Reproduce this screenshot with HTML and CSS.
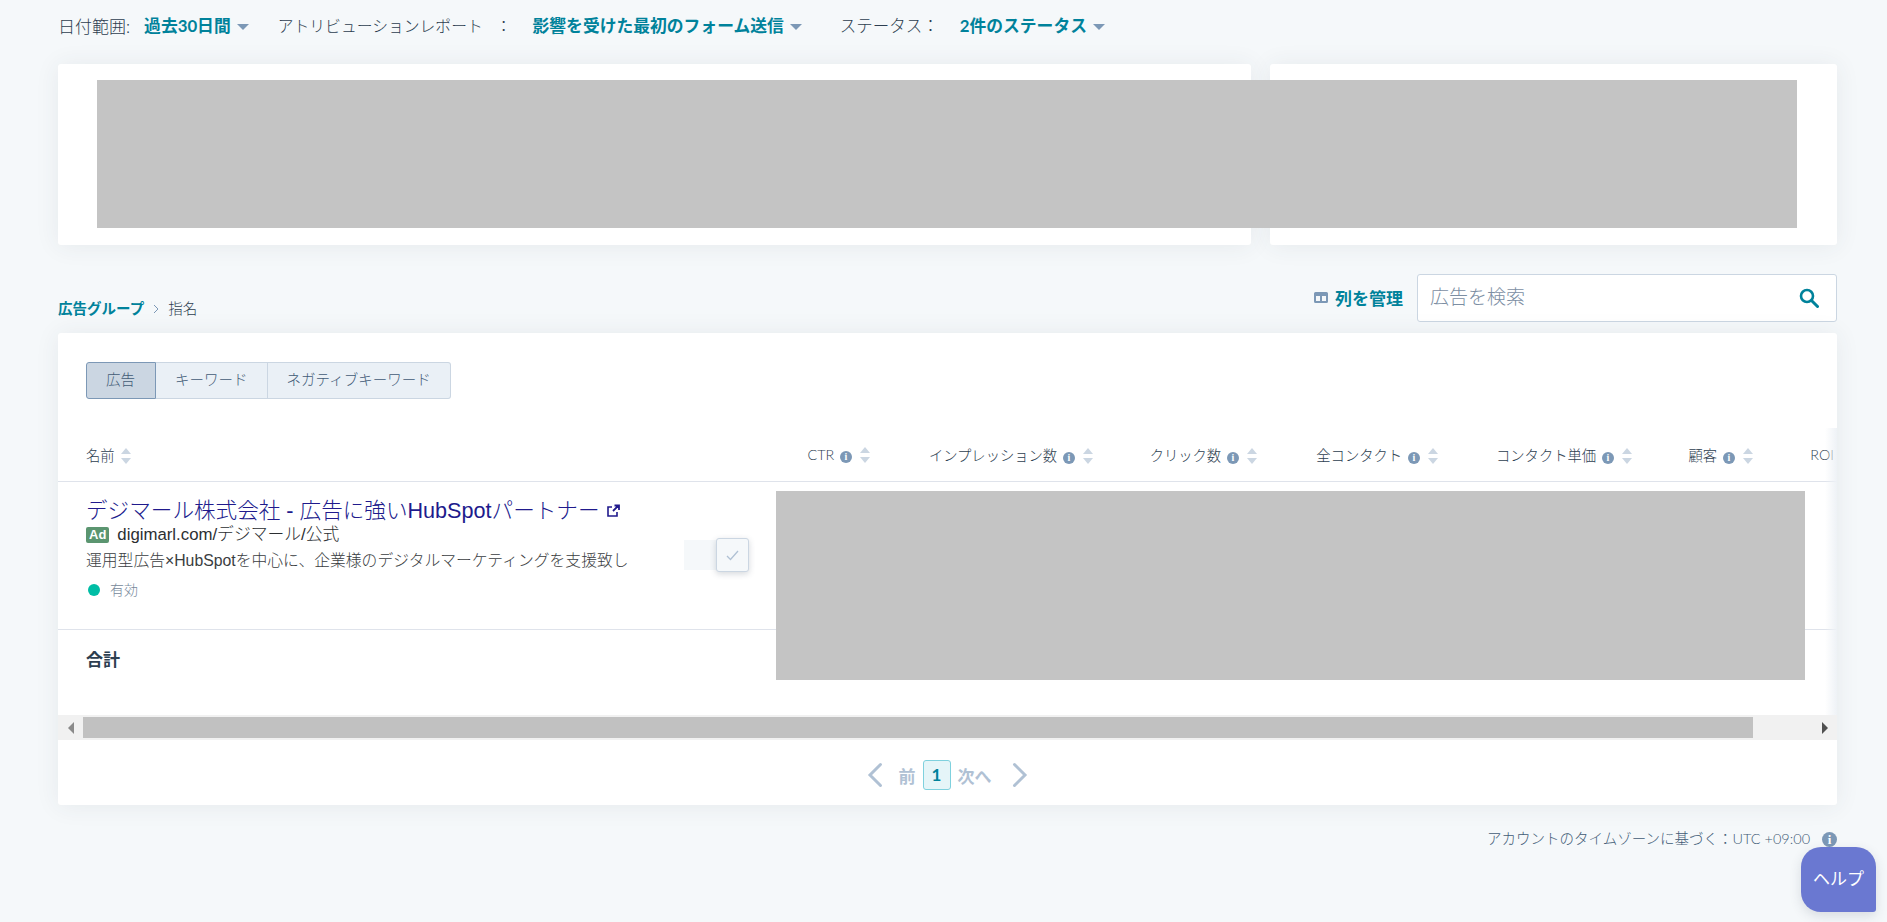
FILE: index.html
```html
<!DOCTYPE html>
<html lang="ja">
<head>
<meta charset="utf-8">
<title>広告</title>
<link rel="stylesheet" href="styles.css">
</head>
<body>
<div class="filters">
    <span class="filter-label">日付範囲:</span>
    <a class="filter-value">過去30日間<i class="caret"></i></a>
    <span class="filter-label second">アトリビューションレポート<span class="colon">：</span></span>
    <a class="filter-value">影響を受けた最初のフォーム送信<i class="caret"></i></a>
    <span class="filter-label third">ステータス：</span>
    <a class="filter-value">2件のステータス<i class="caret"></i></a>
</div>

<div class="summary">
    <div class="card summary-left"></div>
    <div class="card summary-right"></div>
    <div class="redact redact-top"></div>
</div>

<div class="toolbar">
    <div class="crumbs">
        <a>広告グループ</a>
        <svg class="crumb-sep" width="8" height="10" viewBox="0 0 8 10"><path d="M2 1l4 4-4 4" fill="none" stroke="#7c98b6" stroke-width="1"/></svg>
        <span>指名</span>
    </div>
    <div class="toolbar-right">
        <a class="manage">
            <svg width="14" height="11" viewBox="0 0 14 11"><path fill-rule="evenodd" d="M1.500 0h11A1.500 1.500 0 0 1 14 1.500v8a1.500 1.500 0 0 1-1.500 1.500h-11A1.500 1.500 0 0 1 0 9.500v-8A1.500 1.500 0 0 1 1.500 0zM2 4v5h4V4zm6 0v5h4V4z" fill="#7c98b6"/></svg>
            列を管理
        </a>
        <div class="search">
            <span>広告を検索</span>
            <svg width="20" height="20" viewBox="0 0 20 20"><circle cx="8" cy="8" r="6" fill="none" stroke="#00829b" stroke-width="2.600"/><path d="M12.500 12.500L18.500 18.500" stroke="#00829b" stroke-width="3" stroke-linecap="round"/></svg>
        </div>
    </div>
</div>

<div class="card main">
    <div class="tabs">
        <a class="tab active">広告</a>
        <a class="tab">キーワード</a>
        <a class="tab">ネガティブキーワード</a>
    </div>

    <div class="table-wrap">
        <div class="row head">
            <div class="name-col">名前<i class="sort"></i></div>
            <div class="col c1">CTR <i class="info"></i><i class="sort"></i></div>
            <div class="col c2">インプレッション数 <i class="info"></i><i class="sort"></i></div>
            <div class="col c3">クリック数 <i class="info"></i><i class="sort"></i></div>
            <div class="col c4">全コンタクト <i class="info"></i><i class="sort"></i></div>
            <div class="col c5">コンタクト単価 <i class="info"></i><i class="sort"></i></div>
            <div class="col c6">顧客 <i class="info"></i><i class="sort"></i></div>
            <div class="col c7">ROI</div>
        </div>

        <div class="row ad-row">
            <div class="ad">
                <div class="ad-title">デジマール株式会社 - 広告に強いHubSpotパートナー
                    <svg width="14" height="14" viewBox="0 0 14 14"><path d="M6 3H2v9h9V8" fill="none" stroke="#201a8c" stroke-width="1.600"/><path d="M7 7l5-5M8.500 1.500H13V6" fill="none" stroke="#201a8c" stroke-width="1.800"/></svg>
                </div>
                <div class="ad-url"><span class="ad-badge">Ad</span>digimarl.com/デジマール/公式</div>
                <div class="ad-desc">運用型広告×HubSpotを中心に、企業様のデジタルマーケティングを支援致します。</div>
                <div class="ad-status"><i class="dot"></i>有効</div>
            </div>
            <div class="toggle">
                <div class="toggle-knob">
                    <svg width="13" height="11" viewBox="0 0 13 11"><path d="M1 6l3.500 3.500L12 1" fill="none" stroke="#b0c1d4" stroke-width="1.300"/></svg>
                </div>
            </div>
        </div>

        <div class="row total-row">合計</div>
        <div class="edge-shadow"></div>
    </div>

    <div class="scrollbar">
        <div class="scroll-btn"><i class="arrow-left"></i></div>
        <div class="scroll-thumb"></div>
        <div class="scroll-btn end"><i class="arrow-right"></i></div>
    </div>

    <div class="pager">
        <svg width="16" height="26" viewBox="0 0 16 26"><path d="M13.500 2.500L3 13l10.500 10.500" fill="none" stroke="#b0c1d4" stroke-width="3" stroke-linecap="round"/></svg>
        <span class="pager-text prev">前</span>
        <span class="pager-num">1</span>
        <span class="pager-text next">次へ</span>
        <svg width="16" height="26" viewBox="0 0 16 26"><path d="M2.500 2.500L13 13 2.500 23.500" fill="none" stroke="#b0c1d4" stroke-width="3" stroke-linecap="round"/></svg>
    </div>

    <div class="redact redact-table"></div>
</div>

<div class="footnote">アカウントのタイムゾーンに基づく：UTC +09:00 <i class="info big"></i></div>

<a class="help">ヘルプ</a>
</body>
</html>
```

FILE: styles.css
```css
body, html {
    margin: 0;
}

body {
    background-color: #f5f8fa;
    color: #2d3e50;
    font-family: Lato, "Noto Sans CJK JP", sans-serif;
    font-weight: 300;
    height: 922px;
    overflow: hidden;
    position: relative;
    padding: 0 50px 0 58px;
    box-sizing: border-box;
}

a {
    color: #00829b;
}

.card {
    background-color: white;
    border-radius: 3px;
    box-shadow: 0 1px 24px rgba(45, 62, 80, 0.08);
}

.redact {
    background-color: #c4c4c4;
    position: absolute;
}

/* filter bar */
.filters {
    display: flex;
    align-items: center;
    height: 50px;
    font-size: 17px;
}

.filter-label {
    margin-right: 14px;
    white-space: nowrap;
}

.filter-label.second {
    font-size: 15.800px;
    margin-left: 29px;
    margin-right: 21px;
}

.colon {
    margin-left: 13px;
}

.filter-label.third {
    font-size: 16.500px;
    margin-left: 38px;
    margin-right: 21px;
}

.filter-value {
    font-size: 16.800px;
    font-weight: 700;
    white-space: nowrap;
}

.caret {
    display: inline-block;
    margin-left: 6px;
    vertical-align: 2px;
    border-left: 6px solid transparent;
    border-right: 6px solid transparent;
    border-top: 6px solid #7c98b6;
}

/* top cards */
.summary {
    display: flex;
    gap: 19px;
    height: 181px;
    margin-top: 14px;
    position: relative;
}

.summary-left {
    width: 1193px;
}

.summary-right {
    width: 567px;
}

.redact-top {
    left: 39px;
    top: 16px;
    width: 1700px;
    height: 148px;
}

/* breadcrumb + search */
.toolbar {
    display: flex;
    justify-content: space-between;
    align-items: flex-end;
    height: 48px;
    margin-top: 29px;
}

.crumbs {
    font-size: 14.500px;
    line-height: 20px;
    margin-bottom: 3px;
    display: flex;
    align-items: center;
    gap: 8px;
}

.crumbs a {
    font-weight: 700;
}

.toolbar-right {
    display: flex;
    align-items: center;
    gap: 14px;
}

.manage {
    font-size: 17px;
    font-weight: 700;
    display: flex;
    align-items: center;
    gap: 7px;
    margin-bottom: 1px;
}

.search {
    width: 420px;
    height: 48px;
    box-sizing: border-box;
    background-color: white;
    border: 1px solid #cbd6e2;
    border-radius: 3px;
    padding: 0 17px 5px 12px;
    display: flex;
    justify-content: space-between;
    align-items: center;
    font-size: 19px;
    color: #7c8ea3;
}

.search svg {
    margin-top: 5px;
}

/* main card */
.main {
    height: 472px;
    margin-top: 11px;
    position: relative;
}

.tabs {
    display: inline-flex;
    margin: 29px 0 0 28px;
    height: 37px;
    font-size: 14.500px;
    vertical-align: top;
}

.tab {
    color: #425b76;
    background-color: #eaf0f6;
    border: 1px solid #cbd6e2;
    border-left: 0;
    padding: 0 19px;
    line-height: 33px;
    white-space: nowrap;
}

.tab:first-child {
    border-left: 1px solid #7c98b6;
    border-radius: 3px 0 0 3px;
}

.tab:last-child {
    border-radius: 0 3px 3px 0;
}

.tab.active {
    background-color: #cbd6e2;
    border-color: #7c98b6;
    width: 30px;
}

.table-wrap {
    position: absolute;
    top: 95px;
    left: 0;
    right: 0;
    height: 287px;
    overflow: hidden;
}

.row {
    display: flex;
    border-bottom: 1px solid #dfe3eb;
    box-sizing: border-box;
}

.head {
    height: 54px;
    align-items: center;
    font-size: 14.300px;
    white-space: nowrap;
}

.name-col {
    width: 29px;
    margin-left: 28px;
    flex-shrink: 0;
}

.col {
    text-align: right;
    flex-shrink: 0;
}

.c1 { width: 755px; }
.c2 { width: 223px; }
.c3 { width: 164px; }
.c4 { width: 181px; }
.c5 { width: 194px; }
.c6 { width: 121px; }
.c7 { width: 81px; }

.info {
    display: inline-block;
    width: 12px;
    height: 12px;
    border-radius: 50%;
    background-color: #7c98b6;
    color: white;
    font-size: 10px;
    font-weight: 700;
    font-style: normal;
    line-height: 12px;
    text-align: center;
    vertical-align: 0;
    margin-left: 2px;
    font-family: "Liberation Serif", serif;
}

.info::before {
    content: "i";
}

.info.big {
    width: 15px;
    height: 15px;
    line-height: 15px;
    font-size: 13px;
    margin-left: 8px;
    vertical-align: 0;
}

.sort {
    display: inline-block;
    width: 10px;
    height: 16px;
    margin-left: 8px;
    vertical-align: -3px;
    position: relative;
}

.sort::before, .sort::after {
    content: "";
    position: absolute;
    left: 0;
    border-left: 5px solid transparent;
    border-right: 5px solid transparent;
}

.sort::before {
    top: 0;
    border-bottom: 6px solid #cbd6e2;
}

.sort::after {
    bottom: 0;
    border-top: 6px solid #cbd6e2;
}

.name-col .sort {
    margin-left: 6px;
}

.ad-row {
    height: 148px;
    padding: 15px 0 0 28px;
    position: relative;
}

.ad {
    width: 542px;
    overflow: hidden;
}

.ad-title {
    font-size: 21.600px;
    line-height: 27px;
    color: #201a8c;
    white-space: nowrap;
    font-family: "Liberation Sans", "Noto Sans CJK JP", sans-serif;
}

.ad-url {
    font-size: 16.800px;
    line-height: 22px;
    color: #2b2e31;
    font-family: "Liberation Sans", "Noto Sans CJK JP", sans-serif;
}

.ad-badge {
    display: inline-block;
    background-color: #5b9570;
    color: white;
    font-size: 13px;
    font-weight: 700;
    line-height: 16px;
    padding: 0 3px;
    border-radius: 2px;
    margin-right: 8px;
    vertical-align: 1px;
}

.ad-desc {
    font-size: 15.800px;
    line-height: 20px;
    color: #3a3d41;
    margin-top: 5px;
    white-space: nowrap;
    font-family: "Liberation Sans", "Noto Sans CJK JP", sans-serif;
}

.ad-status {
    font-size: 14px;
    line-height: 18px;
    color: #76889a;
    margin-top: 10px;
    display: flex;
    align-items: center;
}

.dot {
    width: 12px;
    height: 12px;
    border-radius: 50%;
    background-color: #00bda5;
    margin: 0 10px 0 2px;
}

.toggle {
    width: 64px;
    height: 30px;
    margin: 43px 0 0 56px;
    background-color: #f5f8fa;
    position: relative;
}

.toggle-knob {
    position: absolute;
    right: -1px;
    top: -2px;
    width: 33px;
    height: 34px;
    box-sizing: border-box;
    background-color: #f5f8fa;
    border: 1px solid #cbd6e2;
    border-radius: 3px;
    box-shadow: 0 2px 6px rgba(45, 62, 80, 0.2);
    display: flex;
    align-items: center;
    justify-content: center;
}

.total-row {
    border-bottom: 0;
    padding: 19px 0 0 28px;
    font-size: 17px;
    font-weight: 700;
    line-height: 22px;
}

.edge-shadow {
    position: absolute;
    top: 0;
    right: 0;
    bottom: 0;
    width: 12px;
    background-image: linear-gradient(to right, rgba(245, 248, 250, 0), #eef2f6);
}

/* scrollbar */
.scrollbar {
    position: absolute;
    top: 382px;
    left: 0;
    right: 0;
    height: 25px;
    background-color: #f1f1f1;
    display: flex;
    align-items: center;
}

.scroll-btn {
    width: 25px;
    display: flex;
    justify-content: center;
}

.scroll-btn.end {
    margin-left: auto;
    width: 25px;
}

.scroll-thumb {
    width: 1670px;
    height: 21px;
    background-color: #c1c1c1;
}

.arrow-left {
    border-top: 6px solid transparent;
    border-bottom: 6px solid transparent;
    border-right: 6px solid #8a8a8a;
}

.arrow-right {
    border-top: 6px solid transparent;
    border-bottom: 6px solid transparent;
    border-left: 6px solid #505050;
}

/* pager */
.pager {
    position: absolute;
    top: 427px;
    left: -1px;
    right: 0;
    display: flex;
    justify-content: center;
    align-items: center;
    font-size: 17px;
    font-weight: 700;
    color: #b0c1d4;
}

.pager-text.prev {
    margin: 0 7px 0 16px;
}

.pager-text.next {
    margin: 0 20px 0 7px;
}

.pager-num {
    width: 28px;
    height: 30px;
    line-height: 28px;
    box-sizing: border-box;
    text-align: center;
    color: #00829b;
    background-color: #e5f5f8;
    border: 1px solid #7fd1de;
    border-radius: 3px;
}

.redact-table {
    left: 718px;
    top: 158px;
    width: 1029px;
    height: 189px;
}

.footnote {
    margin-top: 24px;
    font-size: 14.500px;
    line-height: 20px;
    color: #425b76;
    text-align: right;
}

.help {
    position: absolute;
    left: 1801px;
    top: 847px;
    width: 75px;
    height: 65px;
    box-sizing: border-box;
    background-color: #6a78d1;
    color: white;
    font-size: 17px;
    font-weight: 400;
    line-height: 64px;
    text-align: center;
    border-radius: 20px 20px 3px 20px;
    box-shadow: 0 4px 12px rgba(45, 62, 80, 0.15);
}
```
